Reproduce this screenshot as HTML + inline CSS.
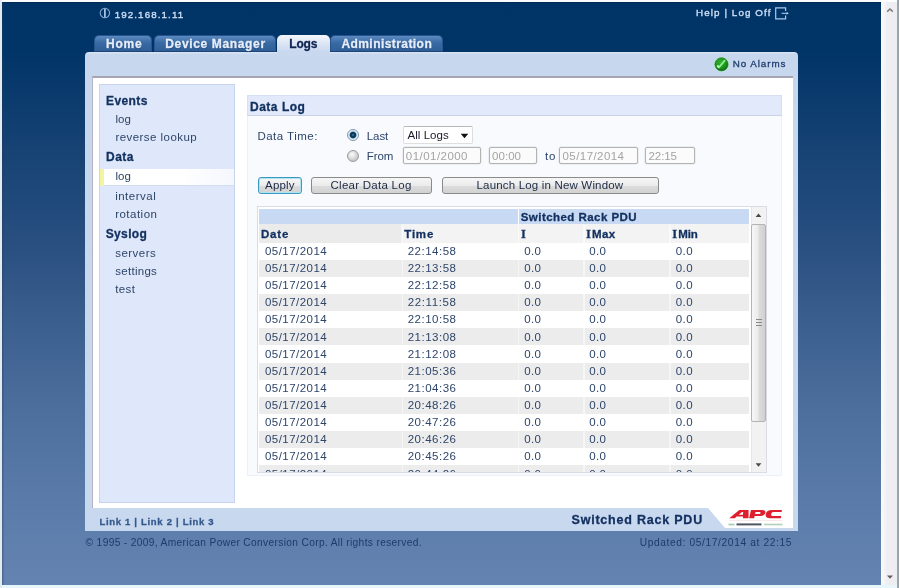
<!DOCTYPE html>
<html><head><meta charset="utf-8"><title>Data Log</title>
<style>
html,body{margin:0;padding:0;}
body{width:899px;height:588px;overflow:hidden;position:relative;background:#fbfdfe;font-family:"Liberation Sans",sans-serif;}
div,span,svg{position:absolute;box-sizing:border-box;}
.t{white-space:nowrap;line-height:0;}
.tab{top:35px;height:17px;border-bottom:1px solid #1f4373 !important;border-radius:5px 5px 0 0;background:linear-gradient(#5a8ac0,#3a6aa3 45%,#2f5f98);border:1px solid #27548c;border-bottom:none;}
.btn{top:177px;height:17px;border:1px solid #8a8a8a;border-radius:3px;background:linear-gradient(#f6f6f6,#ebebeb 50%,#dcdcdc 52%,#d2d2d2);}
.inp{top:147px;height:17px;border:1px solid #b4b4b4;border-radius:2px;background:#fbfbfb;box-shadow:0 0 0 .5px rgba(180,180,180,.35);}
.row{left:259px;width:490px;height:17px;background:#ececec;}
</style></head><body>

<!-- browser viewport -->
<div style="left:0;top:0;width:1.5px;height:588px;background:#e2eaf2"></div>
<div style="left:1.5px;top:2px;width:879.5px;height:583px;box-shadow:inset 1.5px 0 rgba(40,60,90,.35);background:linear-gradient(rgb(0,51,102) 0%,rgb(1,52,103) 8%,rgb(22,66,116) 25%,rgb(40,79,128) 41%,rgb(54,90,138) 51%,rgb(74,109,156) 68%,rgb(90,123,169) 85%,rgb(100,131,177) 100%);border-top:1px solid #022a57"></div>
<div style="left:2px;top:585px;width:897px;height:3px;background:#e6f6fb"></div>
<!-- browser scrollbar -->
<div style="left:881px;top:2px;width:16px;height:583px;background:linear-gradient(90deg,#fbfbfd,#efeff3 40%,#ececf1)"></div>
<div style="left:897px;top:0;width:2px;height:588px;background:#9aa4ab"></div>
<svg style="left:885px;top:6px" width="10" height="8" viewBox="0 0 10 8"><path d="M2.2 5.6 L5 3 L7.8 5.6" fill="none" stroke="#7a7a7a" stroke-width="1.5"/></svg>
<svg style="left:885px;top:573px" width="10" height="8" viewBox="0 0 10 8"><path d="M2 2.5 L5 5.8 L8 2.5 Z" fill="#6a5a5a"/></svg>

<!-- tabs -->
<div class="tab" style="left:94px;width:58px"></div>
<div class="tab" style="left:154px;width:122px"></div>
<div class="tab" style="left:330px;width:113px"></div>
<div style="left:277px;top:34.5px;width:53px;height:19.5px;border-radius:5px 5px 0 0;background:linear-gradient(#f4f7fc,#d5e0f3 60%,#c9d8ef)"></div>

<!-- panel -->
<div style="left:85px;top:52px;width:713px;height:479px;border-radius:4px 4px 0 0;background:linear-gradient(#d9e6f6,#c7d7ee 2.5px,#c8d8ef)"></div>
<div style="left:277px;top:50px;width:53px;height:6px;background:#c9d8ef"></div>
<!-- white box -->
<div style="left:91.5px;top:76px;width:701px;height:432px;background:#fff;border-top:2px solid #a7a5b3;border-left:1px solid #b4b4c4"></div>
<!-- footer white tab w/ logo -->
<svg style="left:700px;top:508px" width="93" height="20" viewBox="0 0 93 20"><path d="M8 0 L93 0 L93 20 L25 20 Z" fill="#fff"/></svg>
<!-- sidebar -->
<div style="left:99px;top:84px;width:135.5px;height:419px;background:#dfe8fa;border:1px solid #c6d4ee"></div>
<div style="left:100px;top:168.5px;width:133.5px;height:17px;background:linear-gradient(90deg,#fff 60%,#f4f7fd);border-bottom:1px solid #d3ddf0"></div>
<div style="left:100px;top:168.5px;width:3.5px;height:17px;background:#f3f3a0"></div>

<!-- title bar + content -->
<div style="left:247px;top:95px;width:534.5px;height:21px;background:#e1e9fa;border:1px solid #d6e0f3;border-bottom-color:#c9d3e6"></div>
<div style="left:247px;top:116px;width:534.5px;height:359.5px;background:#f8fafe;border:1px solid #ebf0f9;border-top:none"></div>

<!-- radios -->
<div style="left:346.8px;top:128.8px;width:12px;height:12px;border-radius:50%;border:1px solid #8496a8;background:radial-gradient(circle at 50% 50%,#4f9fc0 0,#0f3d60 1.2px,#0d3557 2.8px,#bfe3f2 3.8px,#e6f3f9 5px)"></div>
<div style="left:347px;top:150px;width:12px;height:12px;border-radius:50%;border:1px solid #9a9a9a;background:radial-gradient(circle at 40% 35%,#fbfbfb 0,#e4e4e4 3px,#c9c9c9 6px)"></div>
<!-- select -->
<div style="left:402.5px;top:126px;width:70px;height:17.5px;border:1px solid #dedede;border-top-color:#b8b8b8;border-radius:2px;background:#fff"></div>
<svg style="left:460px;top:132.5px" width="9" height="6" viewBox="0 0 9 6"><path d="M0.7 0.8 L8.3 0.8 L4.5 5.2 Z" fill="#111"/></svg>
<!-- inputs -->
<div class="inp" style="left:402.5px;width:78px"></div>
<div class="inp" style="left:488.5px;width:48.5px"></div>
<div class="inp" style="left:559px;width:78.5px"></div>
<div class="inp" style="left:645px;width:49.5px"></div>
<!-- buttons -->
<div class="btn" style="left:257.5px;width:44.5px;border:1.5px solid #3b9abf;box-shadow:inset 0 0 0 1px #b0e2f2"></div>
<div class="btn" style="left:310.5px;width:121.5px"></div>
<div class="btn" style="left:441.5px;width:217.5px"></div>

<!-- table container -->
<div style="left:256.5px;top:206px;width:510px;height:267px;background:#fff;border:1px solid #d9dde3"></div>
<div style="left:259px;top:208.5px;width:259px;height:15.5px;background:#c8d9f3"></div>
<div style="left:519px;top:208.5px;width:230px;height:15.5px;background:#c8d9f3"></div>
<div style="left:259px;top:224.3px;width:490px;height:18.6px;background:#f3f3f3"></div><div style="left:259px;top:224.3px;width:142px;height:18.6px;background:#ebebeb"></div>
<div class="row" style="top:259.9px;height:17.1px"></div>
<div class="row" style="top:294.2px;height:17.1px"></div>
<div class="row" style="top:328.4px;height:17.1px"></div>
<div class="row" style="top:362.6px;height:17.1px"></div>
<div class="row" style="top:396.9px;height:17.1px"></div>
<div class="row" style="top:431.1px;height:17.1px"></div>
<div class="row" style="top:465.4px;height:7.1px"></div>

<!-- cell gaps -->
<div style="left:401.5px;top:225px;width:1.5px;height:247px;background:rgba(255,255,255,.55)"></div>
<div style="left:517.5px;top:225px;width:1.5px;height:247px;background:rgba(255,255,255,.55)"></div>
<div style="left:583px;top:225px;width:1.5px;height:247px;background:rgba(255,255,255,.55)"></div>
<div style="left:669px;top:225px;width:1.5px;height:247px;background:rgba(255,255,255,.55)"></div>
<!-- table scrollbar -->
<div style="left:750.5px;top:207px;width:15.5px;height:265px;background:#f2f2f2;border-left:1px solid #e6e6e6"></div>
<div style="left:751px;top:223.5px;width:14.5px;height:198px;border:1px solid #b4b4b4;border-radius:2px;background:linear-gradient(90deg,#f7f7f7,#ebebeb 45%,#dcdcdc 55%,#d0d0d0)"></div>
<div style="left:756px;top:319px;width:5.5px;height:1px;background:#8a8a8a"></div>
<div style="left:756px;top:322px;width:5.5px;height:1px;background:#8a8a8a"></div>
<div style="left:756px;top:325px;width:5.5px;height:1px;background:#8a8a8a"></div>
<svg style="left:754px;top:212px" width="9" height="6" viewBox="0 0 9 6"><path d="M1.6 4.9 L7.4 4.9 L4.5 1.5 Z" fill="#4a4a4a"/></svg>
<svg style="left:754px;top:462px" width="9" height="6" viewBox="0 0 9 6"><path d="M1.6 1.3 L7.4 1.3 L4.5 4.7 Z" fill="#4a4a4a"/></svg>

<!-- header icons -->
<svg style="left:99px;top:7.4px" width="12" height="12" viewBox="0 0 12 12"><circle cx="5.9" cy="6" r="4.7" fill="none" stroke="#86abd8" stroke-width="1.1"/><rect x="5.1" y="1.8" width="1.6" height="8.4" fill="#b9d3f2"/></svg>
<svg style="left:774px;top:6px" width="17" height="15" viewBox="0 0 17 15"><path d="M11.6 5 V1.8 H1.7 V12.8 H11.6 V9.6" fill="none" stroke="#a9c9ee" stroke-width="1.2"/><path d="M7.6 7.3 H13.2" fill="none" stroke="#a9c9ee" stroke-width="1.1"/><path d="M12.6 5.9 L14.8 7.3 L12.6 8.7 Z" fill="#bcd6f4"/></svg>
<!-- no alarms icon -->
<svg style="left:713px;top:56px" width="17" height="17" viewBox="0 0 17 17"><defs><radialGradient id="g" cx="42%" cy="35%" r="70%"><stop offset="0" stop-color="#33b02e"/><stop offset=".6" stop-color="#1f961f"/><stop offset="1" stop-color="#0d6514"/></radialGradient></defs><circle cx="8.5" cy="8.3" r="7.3" fill="none" stroke="#bdf0d0" stroke-width="1" opacity=".7"/><circle cx="8.5" cy="8.3" r="6.6" fill="url(#g)" stroke="#14701a" stroke-width=".6"/><path d="M4.6 9.9 L6 11.4 L11.6 4.6" fill="none" stroke="#8ff090" stroke-width="1.7" stroke-linecap="round" stroke-linejoin="round"/><circle cx="5.2" cy="10.6" r="1.1" fill="#c8ffc8"/></svg>
<!-- APC logo -->
<svg style="left:727px;top:509px" width="60" height="20" viewBox="0 0 60 20">
<g fill="#de1f2d" transform="translate(2,1) skewX(-12)">
<path fill-rule="evenodd" d="M2 8.3 L10.3 0 H19.6 L21.3 8.3 H15.7 L15.4 6.6 H9 L7.6 8.3 Z M10.7 4.8 H15 L14.6 1.9 H13.4 Z"/>
<path fill-rule="evenodd" d="M21.9 8.3 V0 H32.5 Q37 0 37 2.8 Q37 5.9 32.5 5.9 H26.9 V8.3 Z M26.9 1.9 V4 H31 Q32.2 4 32.2 2.95 Q32.2 1.9 31 1.9 Z"/>
<path d="M53 0 H43 Q37.6 0 37.6 4.1 Q37.6 8.3 43 8.3 H53.6 V6.1 H44.6 Q43 6.1 43 4.1 Q43 2.1 44.6 2.1 H53 Z"/>
</g>
<rect x="2" y="11" width="53" height="0.7" fill="#e9a0a8" opacity=".35"/>
<rect x="1.5" y="14.7" width="6" height="1.6" fill="#8fbf9a" opacity=".8"/>
<rect x="9.5" y="14.4" width="25" height="2" fill="#30384a" opacity=".85"/>
<rect x="37" y="14.7" width="18.5" height="1.6" fill="#8fbf9a" opacity=".7"/>
</svg>
<div style="left:0;top:0;width:899px;height:588px;will-change:transform"><span class="t" style="left:114.70px;top:15px;font-size:9.8px;letter-spacing:1.091px;color:#c9dbf3;-webkit-text-stroke:0.4px;">192.168.1.11</span>
<span class="t" style="left:696.00px;top:13px;font-size:9.8px;letter-spacing:1.104px;color:#c9dbf3;-webkit-text-stroke:0.4px;">Help | Log Off</span>
<span class="t" style="left:106.10px;top:44px;font-size:12px;letter-spacing:0.750px;color:#e6eefa;font-weight:bold;-webkit-text-stroke:0.3px;text-shadow:0 1px 1px rgba(10,40,90,.6);">Home</span>
<span class="t" style="left:165.30px;top:44px;font-size:12px;letter-spacing:0.646px;color:#e6eefa;font-weight:bold;-webkit-text-stroke:0.3px;text-shadow:0 1px 1px rgba(10,40,90,.6);">Device Manager</span>
<span class="t" style="left:289.20px;top:44px;font-size:12px;letter-spacing:-0.117px;color:#0e2552;font-weight:bold;-webkit-text-stroke:0.3px;">Logs</span>
<span class="t" style="left:341.40px;top:44px;font-size:12px;letter-spacing:0.435px;color:#e6eefa;font-weight:bold;-webkit-text-stroke:0.3px;text-shadow:0 1px 1px rgba(10,40,90,.6);">Administration</span>
<span class="t" style="left:732.70px;top:64px;font-size:9.8px;letter-spacing:0.950px;color:#1f3d6d;-webkit-text-stroke:0.3px;">No Alarms</span>
<span class="t" style="left:106.00px;top:101px;font-size:12px;letter-spacing:0.410px;color:#12305f;font-weight:bold;-webkit-text-stroke:0.3px;">Events</span>
<span class="t" style="left:115.40px;top:119px;font-size:11.5px;letter-spacing:0.125px;color:#2e4569;">log</span>
<span class="t" style="left:115.40px;top:137px;font-size:11.5px;letter-spacing:0.450px;color:#2e4569;">reverse lookup</span>
<span class="t" style="left:106.00px;top:157px;font-size:12px;letter-spacing:0.467px;color:#12305f;font-weight:bold;-webkit-text-stroke:0.3px;">Data</span>
<span class="t" style="left:115.40px;top:176px;font-size:11.5px;letter-spacing:0.125px;color:#2e4569;">log</span>
<span class="t" style="left:115.20px;top:196px;font-size:11.5px;letter-spacing:0.493px;color:#2e4569;">interval</span>
<span class="t" style="left:115.20px;top:214px;font-size:11.5px;letter-spacing:0.479px;color:#2e4569;">rotation</span>
<span class="t" style="left:105.70px;top:234px;font-size:12px;letter-spacing:0.370px;color:#12305f;font-weight:bold;-webkit-text-stroke:0.3px;">Syslog</span>
<span class="t" style="left:115.20px;top:253px;font-size:11.5px;letter-spacing:0.467px;color:#2e4569;">servers</span>
<span class="t" style="left:115.20px;top:271px;font-size:11.5px;letter-spacing:0.293px;color:#2e4569;">settings</span>
<span class="t" style="left:115.20px;top:289px;font-size:11.5px;letter-spacing:0.417px;color:#2e4569;">test</span>
<span class="t" style="left:250.00px;top:107px;font-size:12px;letter-spacing:0.507px;color:#12305f;font-weight:bold;-webkit-text-stroke:0.3px;">Data Log</span>
<span class="t" style="left:257.40px;top:136px;font-size:11.5px;letter-spacing:0.489px;color:#2e4569;">Data Time:</span>
<span class="t" style="left:366.70px;top:136px;font-size:11.5px;letter-spacing:-0.050px;color:#2e4569;">Last</span>
<span class="t" style="left:366.70px;top:156px;font-size:11.5px;letter-spacing:-0.083px;color:#2e4569;">From</span>
<span class="t" style="left:407.50px;top:135px;font-size:11.5px;letter-spacing:0.043px;color:#1a1a2a;">All Logs</span>
<span class="t" style="left:405.80px;top:156px;font-size:11.5px;letter-spacing:0.461px;color:#a4a4a4;">01/01/2000</span>
<span class="t" style="left:492.00px;top:156px;font-size:11.5px;letter-spacing:0.050px;color:#a4a4a4;">00:00</span>
<span class="t" style="left:544.90px;top:156px;font-size:11.5px;letter-spacing:1.000px;color:#2e4569;">to</span>
<span class="t" style="left:562.50px;top:156px;font-size:11.5px;letter-spacing:0.439px;color:#a4a4a4;">05/17/2014</span>
<span class="t" style="left:648.50px;top:156px;font-size:11.5px;letter-spacing:-0.075px;color:#a4a4a4;">22:15</span>
<span class="t" style="left:265.10px;top:185px;font-size:11.5px;letter-spacing:0.162px;color:#1c2a45;">Apply</span>
<span class="t" style="left:330.50px;top:185px;font-size:11.5px;letter-spacing:0.265px;color:#1c2a45;">Clear Data Log</span>
<span class="t" style="left:476.50px;top:185px;font-size:11.5px;letter-spacing:0.178px;color:#1c2a45;">Launch Log in New Window</span>
<span class="t" style="left:520.70px;top:217px;font-size:11.5px;letter-spacing:0.459px;color:#12305f;font-weight:bold;-webkit-text-stroke:0.3px;">Switched Rack PDU</span>
<span class="t" style="left:261.00px;top:234px;font-size:11.5px;letter-spacing:0.783px;color:#12305f;font-weight:bold;-webkit-text-stroke:0.3px;">Date</span>
<span class="t" style="left:404.30px;top:234px;font-size:11.5px;letter-spacing:0.783px;color:#12305f;font-weight:bold;-webkit-text-stroke:0.3px;">Time</span>
<span class="t" style="left:521.00px;top:234px;font-size:12.5px;letter-spacing:0.000px;color:#12305f;font-weight:bold;-webkit-text-stroke:0.3px;font-family:'Liberation Serif',serif;">I</span>
<span class="t" style="left:586.00px;top:234px;font-size:12.5px;letter-spacing:0.000px;color:#12305f;font-weight:bold;-webkit-text-stroke:0.3px;font-family:'Liberation Serif',serif;">I</span>
<span class="t" style="left:592.00px;top:234px;font-size:11.5px;letter-spacing:0.325px;color:#12305f;font-weight:bold;-webkit-text-stroke:0.3px;">Max</span>
<span class="t" style="left:672.30px;top:234px;font-size:12.5px;letter-spacing:0.000px;color:#12305f;font-weight:bold;-webkit-text-stroke:0.3px;font-family:'Liberation Serif',serif;">I</span>
<span class="t" style="left:678.30px;top:234px;font-size:11.5px;letter-spacing:-0.200px;color:#12305f;font-weight:bold;-webkit-text-stroke:0.3px;">Min</span>
<span class="t" style="left:265.00px;top:251px;font-size:11.5px;letter-spacing:0.461px;color:#2e4569;">05/17/2014</span>
<span class="t" style="left:407.70px;top:251px;font-size:11.5px;letter-spacing:0.507px;color:#2e4569;">22:14:58</span>
<span class="t" style="left:524.30px;top:251px;font-size:11.5px;letter-spacing:0.350px;color:#2e4569;">0.0</span>
<span class="t" style="left:589.30px;top:251px;font-size:11.5px;letter-spacing:0.350px;color:#2e4569;">0.0</span>
<span class="t" style="left:675.70px;top:251px;font-size:11.5px;letter-spacing:0.500px;color:#2e4569;">0.0</span>
<span class="t" style="left:265.00px;top:268px;font-size:11.5px;letter-spacing:0.461px;color:#2e4569;">05/17/2014</span>
<span class="t" style="left:407.70px;top:268px;font-size:11.5px;letter-spacing:0.507px;color:#2e4569;">22:13:58</span>
<span class="t" style="left:524.30px;top:268px;font-size:11.5px;letter-spacing:0.350px;color:#2e4569;">0.0</span>
<span class="t" style="left:589.30px;top:268px;font-size:11.5px;letter-spacing:0.350px;color:#2e4569;">0.0</span>
<span class="t" style="left:675.70px;top:268px;font-size:11.5px;letter-spacing:0.500px;color:#2e4569;">0.0</span>
<span class="t" style="left:265.00px;top:285px;font-size:11.5px;letter-spacing:0.461px;color:#2e4569;">05/17/2014</span>
<span class="t" style="left:407.70px;top:285px;font-size:11.5px;letter-spacing:0.507px;color:#2e4569;">22:12:58</span>
<span class="t" style="left:524.30px;top:285px;font-size:11.5px;letter-spacing:0.350px;color:#2e4569;">0.0</span>
<span class="t" style="left:589.30px;top:285px;font-size:11.5px;letter-spacing:0.350px;color:#2e4569;">0.0</span>
<span class="t" style="left:675.70px;top:285px;font-size:11.5px;letter-spacing:0.500px;color:#2e4569;">0.0</span>
<span class="t" style="left:265.00px;top:302px;font-size:11.5px;letter-spacing:0.461px;color:#2e4569;">05/17/2014</span>
<span class="t" style="left:407.70px;top:302px;font-size:11.5px;letter-spacing:0.629px;color:#2e4569;">22:11:58</span>
<span class="t" style="left:524.30px;top:302px;font-size:11.5px;letter-spacing:0.350px;color:#2e4569;">0.0</span>
<span class="t" style="left:589.30px;top:302px;font-size:11.5px;letter-spacing:0.350px;color:#2e4569;">0.0</span>
<span class="t" style="left:675.70px;top:302px;font-size:11.5px;letter-spacing:0.500px;color:#2e4569;">0.0</span>
<span class="t" style="left:265.00px;top:319px;font-size:11.5px;letter-spacing:0.461px;color:#2e4569;">05/17/2014</span>
<span class="t" style="left:407.70px;top:319px;font-size:11.5px;letter-spacing:0.507px;color:#2e4569;">22:10:58</span>
<span class="t" style="left:524.30px;top:319px;font-size:11.5px;letter-spacing:0.350px;color:#2e4569;">0.0</span>
<span class="t" style="left:589.30px;top:319px;font-size:11.5px;letter-spacing:0.350px;color:#2e4569;">0.0</span>
<span class="t" style="left:675.70px;top:319px;font-size:11.5px;letter-spacing:0.500px;color:#2e4569;">0.0</span>
<span class="t" style="left:265.00px;top:337px;font-size:11.5px;letter-spacing:0.461px;color:#2e4569;">05/17/2014</span>
<span class="t" style="left:407.70px;top:337px;font-size:11.5px;letter-spacing:0.507px;color:#2e4569;">21:13:08</span>
<span class="t" style="left:524.30px;top:337px;font-size:11.5px;letter-spacing:0.350px;color:#2e4569;">0.0</span>
<span class="t" style="left:589.30px;top:337px;font-size:11.5px;letter-spacing:0.350px;color:#2e4569;">0.0</span>
<span class="t" style="left:675.70px;top:337px;font-size:11.5px;letter-spacing:0.500px;color:#2e4569;">0.0</span>
<span class="t" style="left:265.00px;top:354px;font-size:11.5px;letter-spacing:0.461px;color:#2e4569;">05/17/2014</span>
<span class="t" style="left:407.70px;top:354px;font-size:11.5px;letter-spacing:0.507px;color:#2e4569;">21:12:08</span>
<span class="t" style="left:524.30px;top:354px;font-size:11.5px;letter-spacing:0.350px;color:#2e4569;">0.0</span>
<span class="t" style="left:589.30px;top:354px;font-size:11.5px;letter-spacing:0.350px;color:#2e4569;">0.0</span>
<span class="t" style="left:675.70px;top:354px;font-size:11.5px;letter-spacing:0.500px;color:#2e4569;">0.0</span>
<span class="t" style="left:265.00px;top:371px;font-size:11.5px;letter-spacing:0.461px;color:#2e4569;">05/17/2014</span>
<span class="t" style="left:407.70px;top:371px;font-size:11.5px;letter-spacing:0.507px;color:#2e4569;">21:05:36</span>
<span class="t" style="left:524.30px;top:371px;font-size:11.5px;letter-spacing:0.350px;color:#2e4569;">0.0</span>
<span class="t" style="left:589.30px;top:371px;font-size:11.5px;letter-spacing:0.350px;color:#2e4569;">0.0</span>
<span class="t" style="left:675.70px;top:371px;font-size:11.5px;letter-spacing:0.500px;color:#2e4569;">0.0</span>
<span class="t" style="left:265.00px;top:388px;font-size:11.5px;letter-spacing:0.461px;color:#2e4569;">05/17/2014</span>
<span class="t" style="left:407.70px;top:388px;font-size:11.5px;letter-spacing:0.507px;color:#2e4569;">21:04:36</span>
<span class="t" style="left:524.30px;top:388px;font-size:11.5px;letter-spacing:0.350px;color:#2e4569;">0.0</span>
<span class="t" style="left:589.30px;top:388px;font-size:11.5px;letter-spacing:0.350px;color:#2e4569;">0.0</span>
<span class="t" style="left:675.70px;top:388px;font-size:11.5px;letter-spacing:0.500px;color:#2e4569;">0.0</span>
<span class="t" style="left:265.00px;top:405px;font-size:11.5px;letter-spacing:0.461px;color:#2e4569;">05/17/2014</span>
<span class="t" style="left:407.70px;top:405px;font-size:11.5px;letter-spacing:0.507px;color:#2e4569;">20:48:26</span>
<span class="t" style="left:524.30px;top:405px;font-size:11.5px;letter-spacing:0.350px;color:#2e4569;">0.0</span>
<span class="t" style="left:589.30px;top:405px;font-size:11.5px;letter-spacing:0.350px;color:#2e4569;">0.0</span>
<span class="t" style="left:675.70px;top:405px;font-size:11.5px;letter-spacing:0.500px;color:#2e4569;">0.0</span>
<span class="t" style="left:265.00px;top:422px;font-size:11.5px;letter-spacing:0.461px;color:#2e4569;">05/17/2014</span>
<span class="t" style="left:407.70px;top:422px;font-size:11.5px;letter-spacing:0.507px;color:#2e4569;">20:47:26</span>
<span class="t" style="left:524.30px;top:422px;font-size:11.5px;letter-spacing:0.350px;color:#2e4569;">0.0</span>
<span class="t" style="left:589.30px;top:422px;font-size:11.5px;letter-spacing:0.350px;color:#2e4569;">0.0</span>
<span class="t" style="left:675.70px;top:422px;font-size:11.5px;letter-spacing:0.500px;color:#2e4569;">0.0</span>
<span class="t" style="left:265.00px;top:439px;font-size:11.5px;letter-spacing:0.461px;color:#2e4569;">05/17/2014</span>
<span class="t" style="left:407.70px;top:439px;font-size:11.5px;letter-spacing:0.507px;color:#2e4569;">20:46:26</span>
<span class="t" style="left:524.30px;top:439px;font-size:11.5px;letter-spacing:0.350px;color:#2e4569;">0.0</span>
<span class="t" style="left:589.30px;top:439px;font-size:11.5px;letter-spacing:0.350px;color:#2e4569;">0.0</span>
<span class="t" style="left:675.70px;top:439px;font-size:11.5px;letter-spacing:0.500px;color:#2e4569;">0.0</span>
<span class="t" style="left:265.00px;top:456px;font-size:11.5px;letter-spacing:0.461px;color:#2e4569;">05/17/2014</span>
<span class="t" style="left:407.70px;top:456px;font-size:11.5px;letter-spacing:0.507px;color:#2e4569;">20:45:26</span>
<span class="t" style="left:524.30px;top:456px;font-size:11.5px;letter-spacing:0.350px;color:#2e4569;">0.0</span>
<span class="t" style="left:589.30px;top:456px;font-size:11.5px;letter-spacing:0.350px;color:#2e4569;">0.0</span>
<span class="t" style="left:675.70px;top:456px;font-size:11.5px;letter-spacing:0.500px;color:#2e4569;">0.0</span>
<span class="t" style="left:99.40px;top:522px;font-size:9.5px;letter-spacing:0.693px;color:#34598c;font-weight:bold;-webkit-text-stroke:0.3px;">Link 1 | Link 2 | Link 3</span>
<span class="t" style="left:571.50px;top:520px;font-size:12.5px;letter-spacing:0.788px;color:#12305f;font-weight:bold;-webkit-text-stroke:0.3px;">Switched Rack PDU</span>
<span class="t" style="left:85.60px;top:543px;font-size:10.2px;letter-spacing:0.345px;color:#1d3b6b;">© 1995 - 2009, American Power Conversion Corp. All rights reserved.</span>
<span class="t" style="left:639.70px;top:543px;font-size:10.2px;letter-spacing:0.626px;color:#1d3b6b;">Updated: 05/17/2014 at 22:15</span><div style="left:259px;top:464px;width:490px;height:8.4px;overflow:hidden"><span class="t" style="left:6.00px;top:10px;font-size:11.5px;letter-spacing:0.461px;color:#2e4569;">05/17/2014</span>
<span class="t" style="left:148.70px;top:10px;font-size:11.5px;letter-spacing:0.507px;color:#2e4569;">20:44:26</span>
<span class="t" style="left:265.30px;top:10px;font-size:11.5px;letter-spacing:0.350px;color:#2e4569;">0.0</span>
<span class="t" style="left:330.30px;top:10px;font-size:11.5px;letter-spacing:0.350px;color:#2e4569;">0.0</span>
<span class="t" style="left:416.70px;top:10px;font-size:11.5px;letter-spacing:0.500px;color:#2e4569;">0.0</span></div></div>
</body></html>
